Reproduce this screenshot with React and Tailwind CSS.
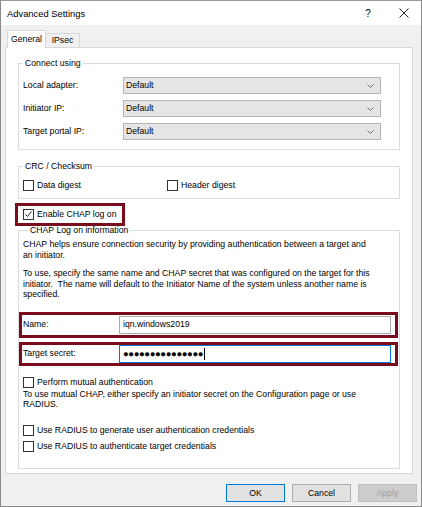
import React from "react";

function Check({ checked }) {
  return (
    <span className="w-[11px] h-[11px] border border-[#333333] bg-white flex items-center justify-center shrink-0">
      {checked && (
        <svg width="9" height="9" viewBox="0 0 9 9">
          <path d="M1.5 4.5 L3.5 6.5 L7.5 1.5" stroke="#222" strokeWidth="1" fill="none" />
        </svg>
      )}
    </span>
  );
}

function CheckRow({ checked, label, className = "" }) {
  return (
    <div className={"flex items-center h-[13px] gap-[3px] " + className}>
      <Check checked={checked} />
      <span className="whitespace-nowrap">{label}</span>
    </div>
  );
}

function Combo() {
  return (
    <div className="w-[258px] h-[17px] bg-[#e5e5e5] border border-[#b4b4b4] flex items-center justify-between pl-[2px] pr-[6px]">
      <span>Default</span>
      <svg width="7" height="4" viewBox="0 0 7 4">
        <path d="M0.5 0.5 L3.5 3.5 L6.5 0.5" stroke="#6b6b6b" strokeWidth="1" fill="none" />
      </svg>
    </div>
  );
}

function Group({ label, legendClass = "ml-[4px]", className = "", children }) {
  return (
    <fieldset className={"border border-[#dcdcdc] min-w-0 " + className}>
      <legend className={"px-[2px] leading-[10px] whitespace-nowrap " + legendClass}>{label}</legend>
      {children}
    </fieldset>
  );
}

export default function App() {
  return (
    <div className="w-[422px] h-[507px] bg-[#f0f0f0] border border-[#8a8a8a] border-t-[#9a9a9a] flex flex-col text-[8.7px] leading-[11px] text-black font-['Liberation_Sans',Arial,sans-serif] overflow-hidden">
      {/* Title bar */}
      <div className="h-[24px] bg-white flex items-center shrink-0">
        <span className="pl-[6px] text-[9.4px] flex-1">Advanced Settings</span>
        <span className="text-[10px] w-[10px] mr-[26px] text-center">?</span>
        <svg width="10" height="10" viewBox="0 0 10 10" className="mr-[12px]">
          <path d="M0.5 0.5 L9.5 9.5 M9.5 0.5 L0.5 9.5" stroke="#222" strokeWidth="1" />
        </svg>
      </div>

      {/* Tabs */}
      <div className="mt-[5px] h-[18px] -mb-[1px] flex items-end pl-[6px] relative z-10">
        <div className="h-[18px] w-[39px] bg-white border-t border-l border-r border-[#d9d9d9] flex items-center justify-center pb-[1px]">
          General
        </div>
        <div className="h-[14px] mb-[1px] w-[34px] border-t border-r border-[#d9d9d9] flex items-center justify-center">
          IPsec
        </div>
      </div>

      {/* Panel */}
      <div className="ml-[4px] w-[408px] h-[427px] shrink-0 border border-[#d9d9d9] bg-white flex flex-col pl-[12px] pr-[12px]">
        <Group label="Connect using" className="mt-[10px] pt-[9px] pb-[9px]">
          <div className="grid grid-cols-[100px_258px] gap-y-[6px] pl-[4px] items-center">
            <span>Local adapter:</span>
            <Combo />
            <span>Initiator IP:</span>
            <Combo />
            <span>Target portal IP:</span>
            <Combo />
          </div>
        </Group>

        <Group label="CRC / Checksum" className="mt-[11px] pt-[8px] pb-[6px]">
          <div className="flex pl-[4px]">
            <CheckRow label="Data digest" className="w-[144px]" />
            <CheckRow label="Header digest" />
          </div>
        </Group>

        <div className="mt-[4px] -ml-[3px] w-[110px] h-[23px] border-[3px] border-[#7b0c1e] flex items-center pl-[5px]">
          <CheckRow checked label="Enable CHAP log on" />
        </div>

        <Group label="CHAP Log on information" legendClass="ml-[9px]" className="-mt-[1px] pt-[4px] pb-[15px]">
          <p className="pl-[4px] leading-[10.5px] whitespace-nowrap">
            CHAP helps ensure connection security by providing authentication between a target and
            <br />
            an initiator.
          </p>
          <p className="pl-[4px] mt-[8px] leading-[10.5px] whitespace-nowrap">
            To use, specify the same name and CHAP secret that was configured on the target for this
            <br />
            initiator.&nbsp; The name will default to the Initiator Name of the system unless another name is
            <br />
            specified.
          </p>

          <div className="mt-[12px] w-[379px] h-[26px] border-[3px] border-[#7b0c1e] flex items-center pl-[1px]">
            <span className="w-[96px]">Name:</span>
            <div className="w-[272px] h-[18px] border border-[#acacac] bg-white flex items-center pl-[3px]">
              iqn.windows2019
            </div>
          </div>

          <div className="mt-[4px] w-[379px] h-[24px] border-[3px] border-[#7b0c1e] flex items-center pl-[1px]">
            <span className="w-[96px]">Target secret:</span>
            <div className="w-[272px] h-[18px] border border-[#0078d7] bg-white flex items-center pl-[3px]">
              <span className="text-[9.5px] tracking-[-0.4px] leading-[10px]">●●●●●●●●●●●●●●●</span>
              <span className="w-[1px] h-[12px] bg-black ml-[1px]" />
            </div>
          </div>

          <CheckRow label="Perform mutual authentication" className="mt-[10px] pl-[4px]" />
          <p className="pl-[4px] leading-[10.5px] whitespace-nowrap">
            To use mutual CHAP, either specify an initiator secret on the Configuration page or use
            <br />
            RADIUS.
          </p>
          <CheckRow label="Use RADIUS to generate user authentication credentials" className="mt-[14px] pl-[4px]" />
          <CheckRow label="Use RADIUS to authenticate target credentials" className="mt-[3px] pl-[4px]" />
        </Group>
      </div>

      {/* Buttons */}
      <div className="mt-[10px] flex justify-end gap-[7px] pr-[4px]">
        <button className="w-[59px] h-[18px] border border-[#0078d7] bg-[#e1e1e1] flex items-center justify-center">OK</button>
        <button className="w-[59px] h-[18px] border border-[#adadad] bg-[#e1e1e1] flex items-center justify-center">Cancel</button>
        <button className="w-[59px] h-[18px] border border-[#bfbfbf] bg-[#cccccc] text-[#a0a0a0] flex items-center justify-center">Apply</button>
      </div>
    </div>
  );
}
